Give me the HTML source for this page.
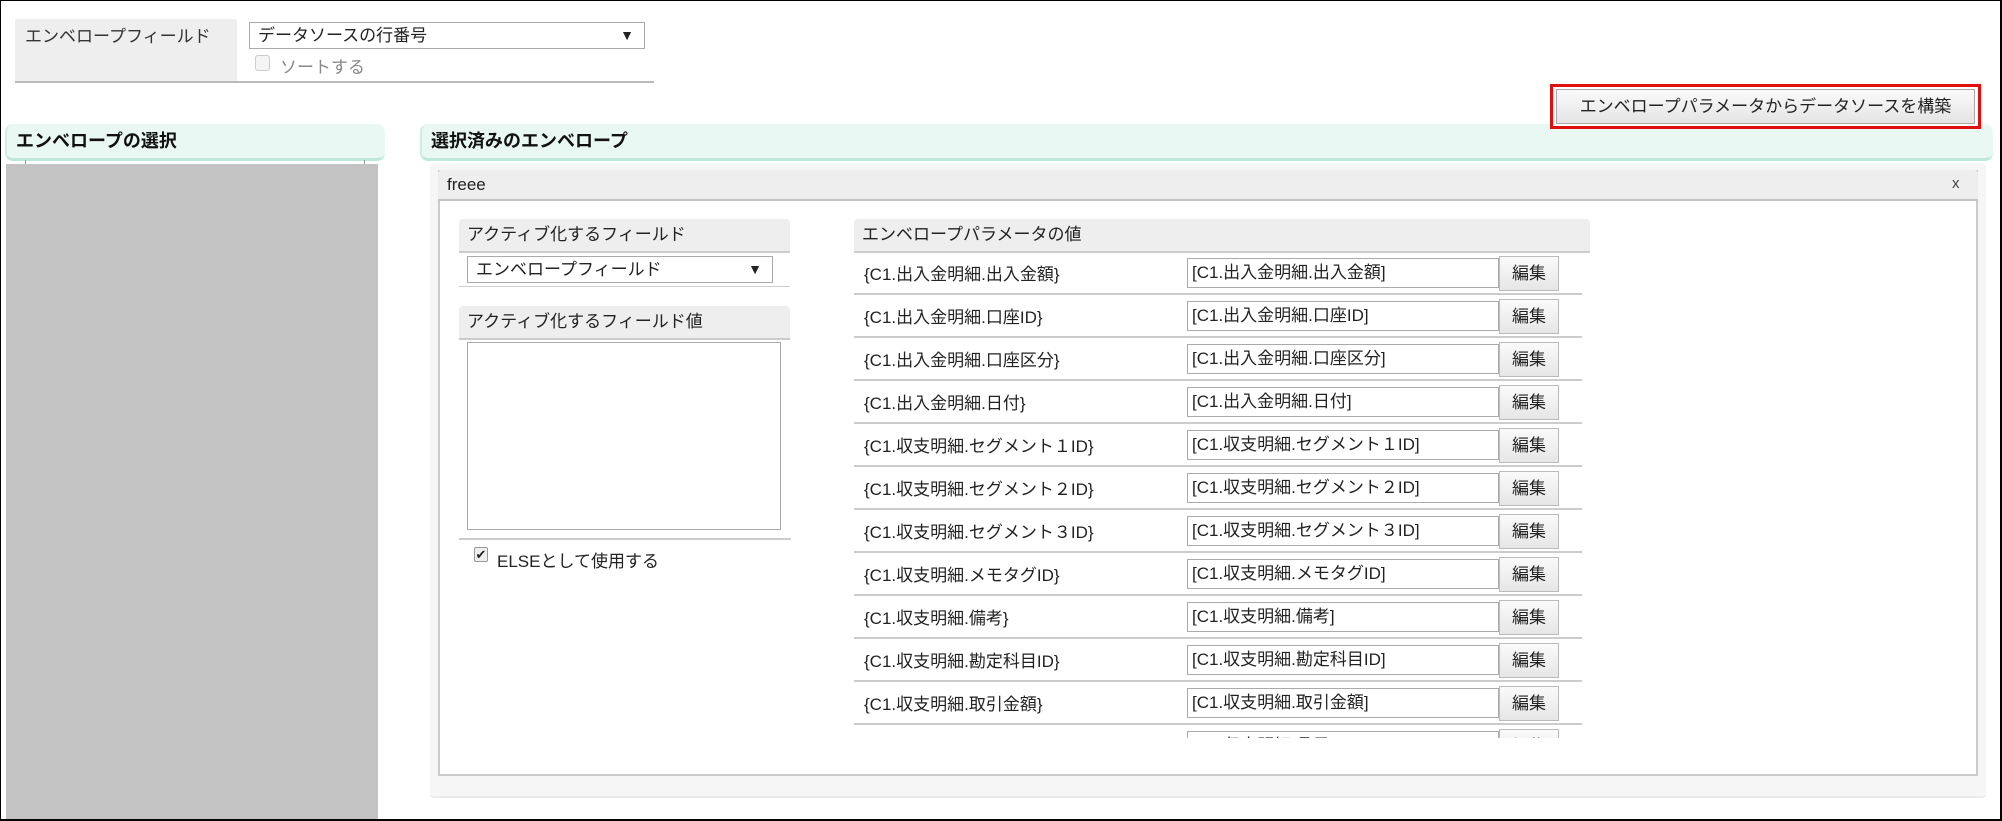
<!DOCTYPE html>
<html><head><meta charset="utf-8"><style>
*{box-sizing:border-box;margin:0;padding:0}
body{width:2002px;height:821px;position:relative;overflow:hidden;background:#fff;font-family:"Liberation Sans","Noto Sans CJK JP",sans-serif;font-size:17px;color:#222}
.a{position:absolute}
.frame{left:0;top:0;width:2002px;height:821px;border:1px solid #000;border-right:2px solid #000;border-bottom:2px solid #000;z-index:20}
.sel{background:#fff;border:1px solid #aaa;padding:0 8px;line-height:25px;font-size:17px}
.sel:after{content:"▼";position:absolute;right:10px;top:0;font-size:14px}
.hdr{background:#e9f8f2;border-bottom:3px solid #bde9d8;border-left:2px solid #cdeee2;border-radius:8px;font-weight:bold;font-size:18px;line-height:34px;padding-left:9px;color:#111}
.gh{background:#eeeeee;border-bottom:2px solid #ccc;line-height:32px;padding-left:8px;border-radius:4px 4px 0 0}
.row{left:854px;width:728px;height:43px;border-bottom:2px solid #ccc}
.row .l{position:absolute;left:10px;top:8px}
.row .i{position:absolute;left:333px;top:6px;width:312px;height:30px;border:1px solid #aaa;padding-left:4px;line-height:28px;background:#fff}
.row .b{position:absolute;left:645px;top:4px;width:60px;height:35px;border:1px solid #bbb;background:linear-gradient(#fafafa,#e6e6e6);text-align:center;line-height:33px}
</style></head><body>
<div class="a frame"></div>
<div class="a" style="left:15px;top:19px;width:222px;height:64px;background:#eee;padding:3px 0 0 10px;color:#333">エンベロープフィールド</div>
<div class="a" style="left:15px;top:81px;width:639px;height:2px;background:#bbb"></div>
<div class="a sel" style="left:249px;top:22px;width:396px;height:27px">データソースの行番号</div>
<div class="a" style="left:255px;top:55px;width:15px;height:16px;border:1px solid #ccc;border-radius:3px;background:#f4f4f4"></div>
<div class="a" style="left:280px;top:53px;color:#888">ソートする</div>

<div class="a hdr" style="left:5px;top:124px;width:380px;height:37px">エンベロープの選択</div>
<div class="a" style="left:6px;top:164px;width:372px;height:657px;background:#c3c3c3"></div>
<div class="a" style="left:25px;top:160px;width:1px;height:4px;background:#999"></div>
<div class="a" style="left:364px;top:160px;width:1px;height:4px;background:#999"></div>

<div class="a hdr" style="left:420px;top:124px;width:1573px;height:37px">選択済みのエンベロープ</div>

<div class="a" style="left:1550px;top:84px;width:431px;height:45px;border:3px solid #e01010;z-index:10;background:#fff"></div>
<div class="a" style="left:1556px;top:89px;width:419px;height:35px;border:1px solid #aaa;background:linear-gradient(#fafafa,#e4e4e4);text-align:center;line-height:33px;z-index:11">エンベロープパラメータからデータソースを構築</div>

<div class="a" style="left:430px;top:163px;width:1556px;height:635px;background:#f6f6f6;border-radius:4px;border-bottom:2px solid #eaeaea"></div>
<div class="a" style="left:438px;top:170px;width:1540px;height:606px;background:#fff;border:2px solid #ccc;border-top:none"></div>
<div class="a" style="left:438px;top:170px;width:1540px;height:31px;background:#eee;border-bottom:2px solid #c4c4c4;line-height:29px;padding-left:9px;border-radius:4px 4px 0 0">freee</div>
<div class="a" style="left:1952px;top:175px;font-size:15px;color:#444">x</div>

<div class="a gh" style="left:459px;top:219px;width:331px;height:34px">アクティブ化するフィールド</div>
<div class="a sel" style="left:467px;top:256px;width:306px;height:27px">エンベロープフィールド</div>
<div class="a" style="left:459px;top:286px;width:331px;height:1px;background:#ccc"></div>
<div class="a gh" style="left:459px;top:306px;width:331px;height:34px">アクティブ化するフィールド値</div>
<div class="a" style="left:467px;top:342px;width:314px;height:188px;border:1px solid #aaa;background:#fff"></div>
<div class="a" style="left:459px;top:538px;width:332px;height:2px;background:#ccc"></div>
<div class="a" style="left:474px;top:547px;width:14px;height:15px;border:1px solid #999;border-radius:2px;background:#eee;font-size:13px;line-height:13px;text-align:center">✔</div>
<div class="a" style="left:497px;top:547px">ELSEとして使用する</div>

<div class="a gh" style="left:854px;top:219px;width:736px;height:34px">エンベロープパラメータの値</div>
<div class="a" style="left:854px;top:253px;width:730px;height:485px;overflow:hidden">
<div style="position:relative;left:-854px;top:-253px">
<div class="a row" style="top:252px"><span class="l">{C1.出入金明細.出入金額}</span><div class="i">[C1.出入金明細.出入金額]</div><div class="b">編集</div></div>
<div class="a row" style="top:295px"><span class="l">{C1.出入金明細.口座ID}</span><div class="i">[C1.出入金明細.口座ID]</div><div class="b">編集</div></div>
<div class="a row" style="top:338px"><span class="l">{C1.出入金明細.口座区分}</span><div class="i">[C1.出入金明細.口座区分]</div><div class="b">編集</div></div>
<div class="a row" style="top:381px"><span class="l">{C1.出入金明細.日付}</span><div class="i">[C1.出入金明細.日付]</div><div class="b">編集</div></div>
<div class="a row" style="top:424px"><span class="l">{C1.収支明細.セグメント１ID}</span><div class="i">[C1.収支明細.セグメント１ID]</div><div class="b">編集</div></div>
<div class="a row" style="top:467px"><span class="l">{C1.収支明細.セグメント２ID}</span><div class="i">[C1.収支明細.セグメント２ID]</div><div class="b">編集</div></div>
<div class="a row" style="top:510px"><span class="l">{C1.収支明細.セグメント３ID}</span><div class="i">[C1.収支明細.セグメント３ID]</div><div class="b">編集</div></div>
<div class="a row" style="top:553px"><span class="l">{C1.収支明細.メモタグID}</span><div class="i">[C1.収支明細.メモタグID]</div><div class="b">編集</div></div>
<div class="a row" style="top:596px"><span class="l">{C1.収支明細.備考}</span><div class="i">[C1.収支明細.備考]</div><div class="b">編集</div></div>
<div class="a row" style="top:639px"><span class="l">{C1.収支明細.勘定科目ID}</span><div class="i">[C1.収支明細.勘定科目ID]</div><div class="b">編集</div></div>
<div class="a row" style="top:682px"><span class="l">{C1.収支明細.取引金額}</span><div class="i">[C1.収支明細.取引金額]</div><div class="b">編集</div></div>
<div class="a row" style="top:725px"><span class="l">{C1.収支明細.品目ID}</span><div class="i">[C1.収支明細.品目ID]</div><div class="b">編集</div></div>
</div></div>
</body></html>
